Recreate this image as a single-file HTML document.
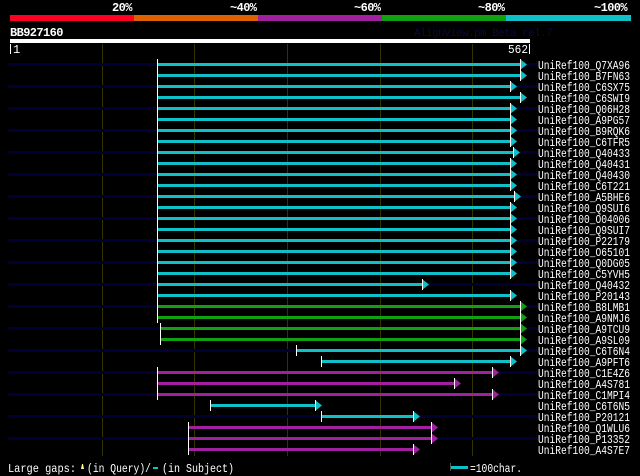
<!DOCTYPE html>
<html><head><meta charset="utf-8"><style>
html,body{margin:0;padding:0;background:#000;width:640px;height:476px;overflow:hidden}
svg{display:block}
text{font-family:"Liberation Mono",monospace;fill:#fff}
.l{font-size:12px}
.b{font-size:12px;font-weight:bold;letter-spacing:-0.6px}
</style></head><body>
<svg width="640" height="476" viewBox="0 0 640 476" xmlns="http://www.w3.org/2000/svg">
<text class="b" x="112" y="11">20%</text>
<text class="b" x="230" y="11">~40%</text>
<text class="b" x="354" y="11">~60%</text>
<text class="b" x="478" y="11">~80%</text>
<text class="b" x="594" y="11">~100%</text>
<rect x="10" y="15" width="124" height="6" fill="#ff0022"/>
<rect x="134" y="15" width="124" height="6" fill="#e06000"/>
<rect x="258" y="15" width="124" height="6" fill="#a020a0"/>
<rect x="382" y="15" width="124" height="6" fill="#10a010"/>
<rect x="506" y="15" width="125" height="6" fill="#10c0c8"/>
<text class="b" x="10" y="36">BB927160</text>
<text x="414" y="36" style="font-size:11px;fill:#0a0a3a;letter-spacing:-0.6px">AlignView.pm Beta rel.7</text>
<rect x="10" y="39" width="520" height="4" fill="#fff"/>
<rect x="10" y="44" width="1" height="10" fill="#fff"/>
<text class="l" x="13" y="53">1</text>
<text class="l" x="508" y="53" textLength="20" lengthAdjust="spacingAndGlyphs">562</text>
<rect x="529" y="44" width="1" height="10" fill="#fff"/>
<g fill="#333300">
<rect x="102" y="44" width="1" height="412"/><rect x="194" y="44" width="1" height="412"/><rect x="287" y="44" width="1" height="412"/><rect x="380" y="44" width="1" height="412"/><rect x="472" y="44" width="1" height="412"/>
</g>
<g id="rows"></g>
<text class="l" x="8" y="472" textLength="68" lengthAdjust="spacingAndGlyphs">Large gaps:</text>
<path d="M81 469 L84 469 L83 464 L82 464 Z" fill="#ffff99"/>
<text class="l" x="87" y="472" textLength="64" lengthAdjust="spacingAndGlyphs">(in Query)/</text>
<rect x="153" y="467" width="5" height="2" fill="#10c0c8"/>
<text class="l" x="162" y="472" textLength="72" lengthAdjust="spacingAndGlyphs">(in Subject)</text>
<rect x="450" y="463" width="1" height="8" fill="#555"/>
<rect x="451" y="466" width="17" height="3" fill="#10c0c8"/>
<text class="l" x="470" y="472" textLength="52" lengthAdjust="spacingAndGlyphs">=100char.</text>
</svg>
<script>
var C={c:"#10c0c8",g:"#10a010",p:"#a020a0"};
var R=[["Q7XA96",157,525,1,"c"],["B7FN63",157,525,0,"c"],["C6SX75",157,515,1,"c"],["C6SWI9",157,525,0,"c"],["Q06H28",157,515,1,"c"],["A9PG57",157,515,0,"c"],["B9RQK6",157,515,1,"c"],["C6TFR5",157,515,0,"c"],["Q40433",157,518,1,"c"],["Q40431",157,515,0,"c"],["Q40430",157,515,1,"c"],["C6T221",157,515,0,"c"],["A5BHE6",157,519,1,"c"],["Q9SUI6",157,515,0,"c"],["O04006",157,515,1,"c"],["Q9SUI7",157,515,0,"c"],["P22179",157,515,1,"c"],["O65101",157,515,0,"c"],["Q0DG05",157,515,1,"c"],["C5YVH5",157,515,0,"c"],["Q40432",157,427,1,"c"],["P20143",157,515,0,"c"],["B8LMB1",157,525,1,"g"],["A9NMJ6",157,525,0,"g"],["A9TCU9",160,525,1,"g"],["A9SL09",160,525,0,"g"],["C6T6N4",296,525,1,"c"],["A9PFT6",321,515,0,"c"],["C1E4Z6",157,497,1,"p"],["A4S781",157,459,0,"p"],["C1MPI4",157,497,1,"p"],["C6T6N5",210,320,0,"c"],["P20121",321,418,1,"c"],["Q1WLU6",188,436,0,"p"],["P13352",188,436,1,"p"],["A4S7E7",188,418,0,"p"]];
var s="";
R.forEach(function(r,i){var y=64+11*i,col=C[r[4]],e=r[2];
if(r[3])s+='<rect x="8" y="'+(y-1)+'" width="530" height="3" fill="#000033"/>';
s+='<rect x="'+r[1]+'" y="'+(y-1)+'" width="'+(e-r[1]-4)+'" height="3" fill="'+col+'"/>';
s+='<rect x="'+r[1]+'" y="'+(y-5)+'" width="1" height="11" fill="#fff"/>';
s+='<path d="M'+(e-5)+' '+(y-5)+' L'+(e+2)+' '+(y+0.5)+' L'+(e-5)+' '+(y+6)+' Z" fill="'+col+'"/>';
s+='<rect x="'+(e-5)+'" y="'+(y-5)+'" width="1" height="11" fill="#fff"/>';
s+='<text class="l" x="538" y="'+(y+5)+'" textLength="92" lengthAdjust="spacingAndGlyphs">UniRef100_'+r[0]+'</text>';});
document.getElementById("rows").innerHTML=s;
</script>
</body></html>
